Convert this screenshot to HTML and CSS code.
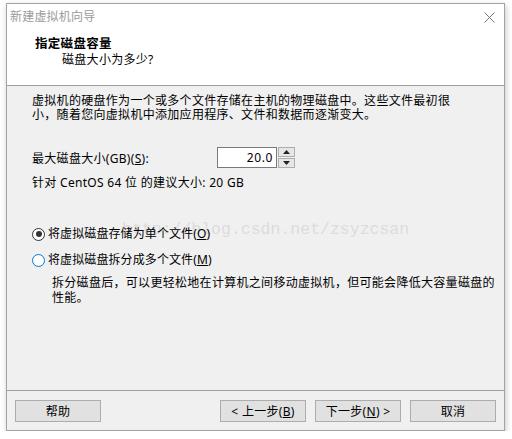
FILE: index.html
```html
<!DOCTYPE html>
<html lang="zh-CN">
<head>
  <meta charset="UTF-8">
  <title>新建虚拟机向导</title>
  <link rel="stylesheet" href="styles.css">
</head>
<body>
  <div class="window">
    <div class="titlebar">
      <span class="title">新建虚拟机向导</span>
      <svg class="close" width="11" height="11" viewBox="0 0 11 11">
        <path d="M0.5 0.5 L10.5 10.5 M10.5 0.5 L0.5 10.5" stroke="#7a7a7a" stroke-width="1" fill="none"/>
      </svg>
    </div>

    <div class="header">
      <div class="header-title">指定磁盘容量</div>
      <div class="header-sub">磁盘大小为多少?</div>
    </div>

    <div class="content">
      <div class="watermark">http://blog.csdn.net/zsyzcsan</div>

      <p class="intro">虚拟机的硬盘作为一个或多个文件存储在主机的物理磁盘中。这些文件最初很<br>小，随着您向虚拟机中添加应用程序、文件和数据而逐渐变大。</p>

      <div class="size-row">
        <label for="disk-size">最大磁盘大小(GB)(<u>S</u>):</label>
        <div class="spin">
          <div class="spin-input" id="disk-size">20.0</div>
          <div class="spin-btns">
            <span class="spin-btn">
              <svg width="7" height="4" viewBox="0 0 7 4"><path d="M0 4 L3.5 0 L7 4 Z" fill="#222"/></svg>
            </span>
            <span class="spin-btn">
              <svg width="7" height="4" viewBox="0 0 7 4"><path d="M0 0 L7 0 L3.5 4 Z" fill="#222"/></svg>
            </span>
          </div>
        </div>
      </div>

      <div class="hint">针对 CentOS 64 位 的建议大小: 20 GB</div>

      <div class="radio checked"><span class="circle"></span>将虚拟磁盘存储为单个文件(<u>O</u>)</div>
      <div class="radio focused"><span class="circle"></span>将虚拟磁盘拆分成多个文件(<u>M</u>)</div>
      <p class="desc">拆分磁盘后，可以更轻松地在计算机之间移动虚拟机，但可能会降低大容量磁盘的<br>性能。</p>
    </div>

    <div class="footer">
      <button class="button">帮助</button>
      <div class="spacer"></div>
      <button class="button">&lt; 上一步(<u>B</u>)</button>
      <button class="button">下一步(<u>N</u>) &gt;</button>
      <button class="button">取消</button>
    </div>
  </div>
</body>
</html>
```

FILE: styles.css
```css
body {
  margin: 0;
  background-color: #ffffff;
  font-family: "Noto Sans", "Noto Sans CJK SC", sans-serif;
  font-size: 12px;
  color: #000000;
}

.window {
  margin: 3px 0 0 6px;
  width: 499px;
  height: 428px;
  box-sizing: border-box;
  border: 1px solid #a3a3a3;
  box-shadow: 1px 2px 6px rgba(0, 0, 0, 0.22);
  display: flex;
  flex-direction: column;
  background-color: #f0f0f0;
}

.titlebar {
  height: 26px;
  background-color: #ffffff;
  display: flex;
  align-items: center;
  padding: 0 9px 0 3px;
}

.title {
  flex: 1;
  color: #9a9a9a;
  line-height: 22px;
  letter-spacing: 0.2px;
}

.close {
  margin-top: 1px;
}

.header {
  height: 56px;
  box-sizing: border-box;
  background-color: #ffffff;
  border-bottom: 1px solid #a0a0a0;
  padding: 6px 0 0 28px;
}

.header-title {
  font-weight: bold;
  font-size: 12.5px;
  line-height: 16px;
  letter-spacing: 0.3px;
}

.header-sub {
  line-height: 16px;
  padding-left: 27px;
  letter-spacing: 0.3px;
}

.content {
  flex: 1;
  position: relative;
  padding: 8px 0 0 25px;
  letter-spacing: 0.3px;
}

.content > * {
  position: relative;
}

.intro {
  margin: 0;
  line-height: 14px;
}

.size-row {
  display: flex;
  align-items: center;
  margin-top: 25px;
  height: 21px;
}

.size-row label {
  width: 185px;
}

.spin {
  display: flex;
  height: 21px;
}

.spin-input {
  width: 60px;
  box-sizing: border-box;
  border: 1px solid #7a7a7a;
  background-color: #ffffff;
  text-align: right;
  padding-right: 3px;
  line-height: 19px;
  letter-spacing: 0.6px;
}

.spin-btns {
  display: flex;
  flex-direction: column;
  margin-left: 1px;
}

.spin-btn {
  width: 17px;
  height: 10px;
  box-sizing: border-box;
  border: 1px solid #adadad;
  background-color: #e6e6e6;
  display: flex;
  align-items: center;
  justify-content: center;
}

.spin-btn + .spin-btn {
  margin-top: 1px;
}

.hint {
  margin-top: 8px;
  line-height: 14px;
}

.radio {
  display: flex;
  align-items: center;
  line-height: 14px;
  margin-top: 12px;
  letter-spacing: 0.1px;
}

.hint + .radio {
  margin-top: 37px;
}

.circle {
  width: 13px;
  height: 13px;
  box-sizing: border-box;
  border-radius: 50%;
  border: 1px solid #333333;
  background-color: #ffffff;
  margin: 0 3px 0 0;
  position: relative;
}

.checked .circle::after {
  content: "";
  position: absolute;
  left: 2.5px;
  top: 2.5px;
  width: 6px;
  height: 6px;
  border-radius: 50%;
  background-color: #333333;
}

.focused .circle {
  border-color: #0078d7;
}

.desc {
  margin: 8px 0 0 20px;
  line-height: 15px;
}

.content > .watermark {
  position: absolute;
  left: 115px;
  top: 134px;
  font-family: "Liberation Mono", monospace;
  font-size: 16.5px;
  letter-spacing: 0;
  color: #dcdcdc;
  white-space: nowrap;
}

.footer {
  height: 40px;
  box-sizing: border-box;
  border-top: 1px solid #a0a0a0;
  padding: 9px 8px 8px 8px;
  display: flex;
  gap: 9px;
}

.spacer {
  flex: 1;
}

.button {
  width: 86px;
  height: 22px;
  padding: 0;
  border: 1px solid #adadad;
  background-color: #e1e1e1;
  font-family: inherit;
  font-size: 12px;
  letter-spacing: 0.3px;
  color: #000000;
}
```
